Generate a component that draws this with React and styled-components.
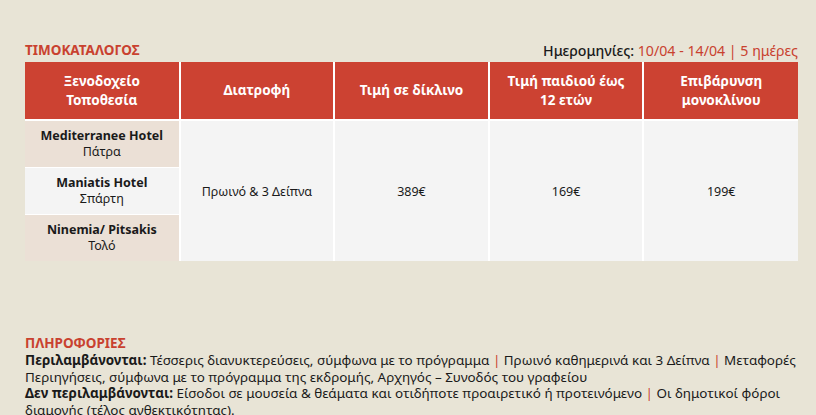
import styled, { createGlobalStyle } from 'styled-components';

const GlobalStyle = createGlobalStyle`
    html, body {
        margin: 0;
        background: #e8e4d6;
    }
    body {
        font-family: 'Noto Sans', 'Open Sans', sans-serif;
        color: #1a1a1a;
    }
`;

const Page = styled.div`
    padding: 41px 18px 0 25px;
`;

const TopBar = styled.div`
    display: flex;
    justify-content: space-between;
    align-items: flex-end;
    height: 18px;
    padding-bottom: 3px;
`;

const Heading = styled.h2`
    margin: 0;
    color: #c9412f;
    font-size: 13.5px;
    font-weight: 700;
    line-height: 17px;
`;

const Dates = styled.div`
    font-size: 14.2px;
    line-height: 17px;
    font-weight: 500;
    span {
        color: #c9412f;
        font-weight: 400;
    }
`;

const Table = styled.table`
    width: 100%;
    border-collapse: collapse;
    border-style: hidden;
    table-layout: fixed;
    font-size: 12.5px;
    text-align: center;
`;

const HeadCell = styled.th`
    background: #cc4232;
    color: #fff;
    font-weight: 700;
    font-size: 13.5px;
    line-height: 19px;
    height: 57px;
    padding: 0 6px;
    border: 2px solid #fff;
`;

const HotelCell = styled.td`
    background: ${(p) => (p.$alt ? '#f4f4f4' : '#ebe0d6')};
    height: 46px;
    padding: 0;
    line-height: 16px;
    border: 2px solid #fff;
    border-width: 1px 2px;
    b {
        display: block;
    }
`;

const ValueCell = styled.td`
    background: #f4f4f4;
    border: 2px solid #fff;
    padding: 0;
`;

const Info = styled.div`
    margin-top: 74px;
    font-size: 13.45px;
    line-height: 16.7px;
    p {
        margin: 0;
    }
    b {
        font-weight: 700;
    }
`;

const Sep = styled.span`
    color: #c9412f;
`;

const hotels = [
    ['Mediterranee Hotel', 'Πάτρα'],
    ['Maniatis Hotel', 'Σπάρτη'],
    ['Ninemia/ Pitsakis', 'Τολό'],
];

export default function App() {
    return (
        <Page>
            <GlobalStyle />
            <TopBar>
                <Heading>ΤΙΜΟΚΑΤΑΛΟΓΟΣ</Heading>
                <Dates>
                    Ημερομηνίες: <span>10/04 - 14/04 | 5 ημέρες</span>
                </Dates>
            </TopBar>
            <Table>
                <thead>
                    <tr>
                        <HeadCell>Ξενοδοχείο<br />Τοποθεσία</HeadCell>
                        <HeadCell>Διατροφή</HeadCell>
                        <HeadCell>Τιμή σε δίκλινο</HeadCell>
                        <HeadCell>Τιμή παιδιού έως<br />12 ετών</HeadCell>
                        <HeadCell>Επιβάρυνση<br />μονοκλίνου</HeadCell>
                    </tr>
                </thead>
                <tbody>
                    {hotels.map(([name, place], i) => (
                        <tr key={name}>
                            <HotelCell $alt={i === 1}>
                                <b>{name}</b>
                                {place}
                            </HotelCell>
                            {i === 0 ? (
                                <>
                                    <ValueCell rowSpan={3}>Πρωινό &amp; 3 Δείπνα</ValueCell>
                                    <ValueCell rowSpan={3}>389€</ValueCell>
                                    <ValueCell rowSpan={3}>169€</ValueCell>
                                    <ValueCell rowSpan={3}>199€</ValueCell>
                                </>
                            ) : null}
                        </tr>
                    ))}
                </tbody>
            </Table>
            <Info>
                <Heading>ΠΛΗΡΟΦΟΡΙΕΣ</Heading>
                <p>
                    <b>Περιλαμβάνονται:</b> Τέσσερις διανυκτερεύσεις, σύμφωνα με το πρόγραμμα{' '}
                    <Sep>|</Sep> Πρωινό καθημερινά και 3 Δείπνα <Sep>|</Sep> Μεταφορές
                    Περιηγήσεις, σύμφωνα με το πρόγραμμα της εκδρομής, Αρχηγός – Συνοδός του
                    γραφείου
                </p>
                <p>
                    <b>Δεν περιλαμβάνονται:</b> Είσοδοι σε μουσεία &amp; θεάματα και οτιδήποτε
                    προαιρετικό ή προτεινόμενο <Sep>|</Sep> Οι δημοτικοί φόροι διαμονής (τέλος
                    ανθεκτικότητας).
                </p>
            </Info>
        </Page>
    );
}
